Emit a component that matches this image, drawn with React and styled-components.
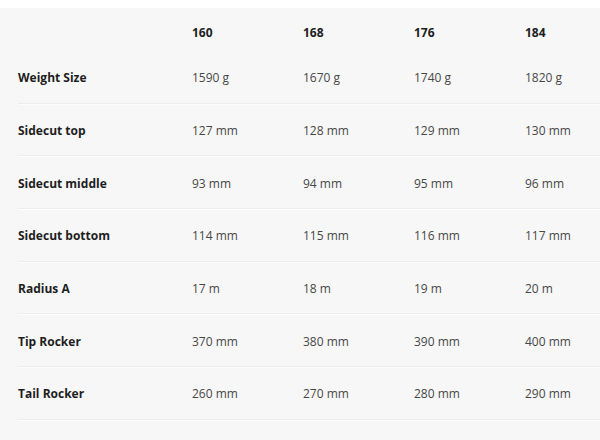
import styled, { createGlobalStyle } from 'styled-components';

const GlobalStyle = createGlobalStyle`
  html, body {
    margin: 0;
    padding: 0;
    background: #fff;
  }
  body {
    font-family: 'Open Sans', 'Liberation Sans', sans-serif;
  }
`;

const sizes = ['160', '168', '176', '184'];

const rows = [
  { label: 'Weight Size', values: ['1590 g', '1670 g', '1740 g', '1820 g'] },
  { label: 'Sidecut top', values: ['127 mm', '128 mm', '129 mm', '130 mm'] },
  { label: 'Sidecut middle', values: ['93 mm', '94 mm', '95 mm', '96 mm'] },
  { label: 'Sidecut bottom', values: ['114 mm', '115 mm', '116 mm', '117 mm'] },
  { label: 'Radius A', values: ['17 m', '18 m', '19 m', '20 m'] },
  { label: 'Tip Rocker', values: ['370 mm', '380 mm', '390 mm', '400 mm'] },
  { label: 'Tail Rocker', values: ['260 mm', '270 mm', '280 mm', '290 mm'] },
];

const App = () => {
  return (
    <>
      <GlobalStyle />
      <Page>
        <SpecTable>
          <HeadRow>
            <Label />
            {sizes.map((size) => (
              <HeadCell key={size}>{size}</HeadCell>
            ))}
          </HeadRow>
          {rows.map((row) => (
            <Row key={row.label}>
              <Label>{row.label}</Label>
              {row.values.map((value, i) => (
                <Cell key={i}>{value}</Cell>
              ))}
            </Row>
          ))}
        </SpecTable>
      </Page>
    </>
  );
};

export default App;

const Page = styled.div`
  width: 600px;
  height: 440px;
  padding-top: 8px;
  box-sizing: border-box;
  overflow: hidden;
`;

const SpecTable = styled.div`
  background: #f7f7f7;
  padding-left: 18px;
  padding-bottom: 30px;
`;

const HeadRow = styled.div`
  display: grid;
  grid-template-columns: 174px 111px 111px 111px 1fr;
  align-items: center;
  height: 43px;
  padding-top: 5px;
  box-sizing: border-box;
`;

const Row = styled.div`
  display: grid;
  grid-template-columns: 174px 111px 111px 111px 1fr;
  align-items: center;
  height: 52.67px;
  padding-top: 2px;
  box-sizing: border-box;
  border-bottom: 1px solid #ededed;
  box-shadow: 0 1px 0 #fdfdfd;
`;

const Label = styled.div`
  font-size: 12px;
  font-weight: 700;
  color: #1e1e1e;
`;

const HeadCell = styled.div`
  font-size: 12px;
  font-weight: 700;
  color: #1e1e1e;
`;

const Cell = styled.div`
  font-size: 12px;
  color: #474747;
`;
